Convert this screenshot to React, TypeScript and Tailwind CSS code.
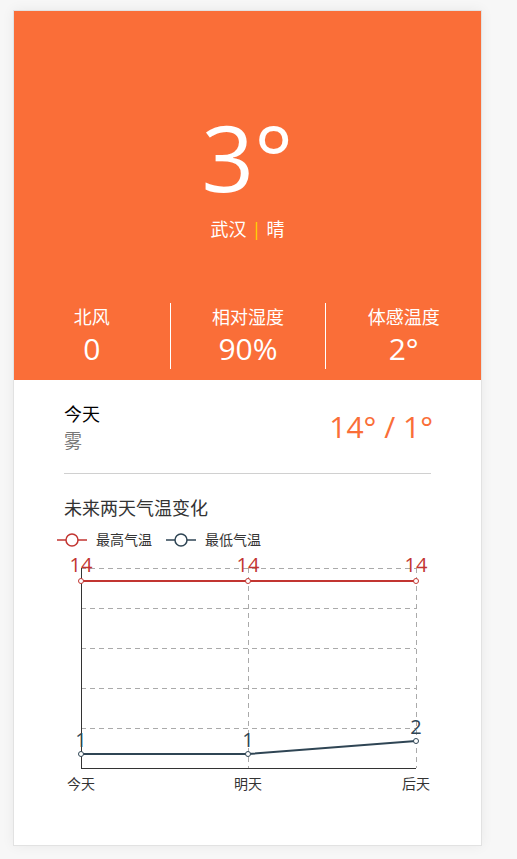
import React from "react";

const RED = "#c23531";
const BLUE = "#2f4554";

function Chart() {
  const ox = 13;
  const oy = 548;
  const X = (x: number) => x - ox;
  const Y = (y: number) => y - oy;
  const xs = [80, 247, 415];
  const gridYs = [568, 608, 648, 688, 728];
  const redY = 581;
  const blueYs = [754, 754, 741];
  const labels = ["今天", "明天", "后天"];
  return (
    <svg width={469} height={255} className="block" style={{ fontFamily: '"Open Sans","Noto Sans CJK SC",sans-serif' }}>
      {gridYs.map((y) => (
        <line key={y} x1={X(80)} x2={X(415)} y1={Y(y) + 0.5} y2={Y(y) + 0.5} stroke="#aaa" strokeDasharray="5 4" strokeWidth={1} />
      ))}
      {xs.slice(1).map((x) => (
        <line key={x} x1={X(x) + 0.5} x2={X(x) + 0.5} y1={Y(568)} y2={Y(768)} stroke="#aaa" strokeDasharray="5 4" strokeWidth={1} />
      ))}
      <line x1={X(80) + 0.5} x2={X(80) + 0.5} y1={Y(568)} y2={Y(768)} stroke="#333" strokeWidth={1} />
      <line x1={X(80)} x2={X(415)} y1={Y(768) + 0.5} y2={Y(768) + 0.5} stroke="#333" strokeWidth={1} />
      <polyline points={xs.map((x) => `${X(x)},${Y(redY)}`).join(" ")} fill="none" stroke={RED} strokeWidth={2} />
      <polyline points={xs.map((x, i) => `${X(x)},${Y(blueYs[i])}`).join(" ")} fill="none" stroke={BLUE} strokeWidth={2} />
      {xs.map((x) => (
        <circle key={"r" + x} cx={X(x)} cy={Y(redY)} r={2.5} fill="#fff" stroke={RED} strokeWidth={1} />
      ))}
      {xs.map((x, i) => (
        <circle key={"b" + x} cx={X(x)} cy={Y(blueYs[i])} r={2.5} fill="#fff" stroke={BLUE} strokeWidth={1} />
      ))}
      {xs.map((x) => (
        <text key={"rl" + x} x={X(x)} y={Y(572)} fill={RED} fontSize={20} textAnchor="middle">14</text>
      ))}
      {xs.map((x, i) => (
        <text key={"bl" + x} x={X(x)} y={Y(blueYs[i] - 7)} fill={BLUE} fontSize={20} textAnchor="middle">{i === 2 ? "2" : "1"}</text>
      ))}
      {xs.map((x, i) => (
        <text key={"xl" + x} x={X(x)} y={Y(789)} fill="#333" fontSize={14} textAnchor="middle">{labels[i]}</text>
      ))}
    </svg>
  );
}

function LegendItem({ color, label }: { color: string; label: string }) {
  return (
    <div className="flex items-center gap-[9px]">
      <svg width={30} height={14}>
        <line x1={0} x2={30} y1={7} y2={7} stroke={color} strokeWidth={1.5} />
        <circle cx={15} cy={7} r={6} fill="#fff" stroke={color} strokeWidth={1.5} />
      </svg>
      <span className="text-[14px] leading-[16px] text-[#333]">{label}</span>
    </div>
  );
}

export default function App() {
  return (
    <div
      className="min-h-[859px] bg-[#f7f7f7] pt-[10px] pl-[13px]"
      style={{ fontFamily: '"Open Sans","Noto Sans CJK SC",sans-serif' }}
    >
      <div className="w-[469px] h-[836px] bg-white border border-[#e2e2e2] shadow-[0_0_12px_rgba(0,0,0,0.06)] flex flex-col">
        <div className="h-[369px] bg-[#fa6e38] flex flex-col items-center text-white pt-[99px]">
          <div className="text-[92px] leading-[94px]">3°</div>
          <div className="mt-[13px] flex items-center gap-[5px] text-[18px] leading-[24px]">
            <span>武汉</span>
            <span className="text-[#ffd700]">|</span>
            <span>晴</span>
          </div>
          <div className="mt-[62px] w-full grid grid-cols-3">
            {[
              ["北风", "0"],
              ["相对湿度", "90%"],
              ["体感温度", "2°"],
            ].map(([l, v], i) => (
              <div
                key={l}
                className={
                  "h-[66px] flex flex-col items-center pt-[2px] " +
                  (i > 0 ? "border-l border-white" : "")
                }
              >
                <div className="text-[18px] leading-[24px]">{l}</div>
                <div className="mt-[2px] text-[30px] leading-[36px]">{v}</div>
              </div>
            ))}
          </div>
        </div>
        <div className="px-[50px] pt-[21px]">
          <div className="flex items-center justify-between border-b border-[#d0d0d0] pb-[18px]">
            <div>
              <div className="text-[18px] leading-[27px] text-black">今天</div>
              <div className="text-[18px] leading-[27px] text-[#777]">雾</div>
            </div>
            <div className="text-[30px] leading-[36px] text-[#fa6e38] mt-[-2px] mr-[-2px]">14° / 1°</div>
          </div>
          <div className="mt-[22px] text-[18px] leading-[24px] text-[#333]">未来两天气温变化</div>
        </div>
        <div className="mt-[12px] flex items-center gap-[14px] pl-[43px]">
          <LegendItem color={RED} label="最高气温" />
          <LegendItem color={BLUE} label="最低气温" />
        </div>
        <div className="mt-[0px]">
          <Chart />
        </div>
      </div>
    </div>
  );
}
